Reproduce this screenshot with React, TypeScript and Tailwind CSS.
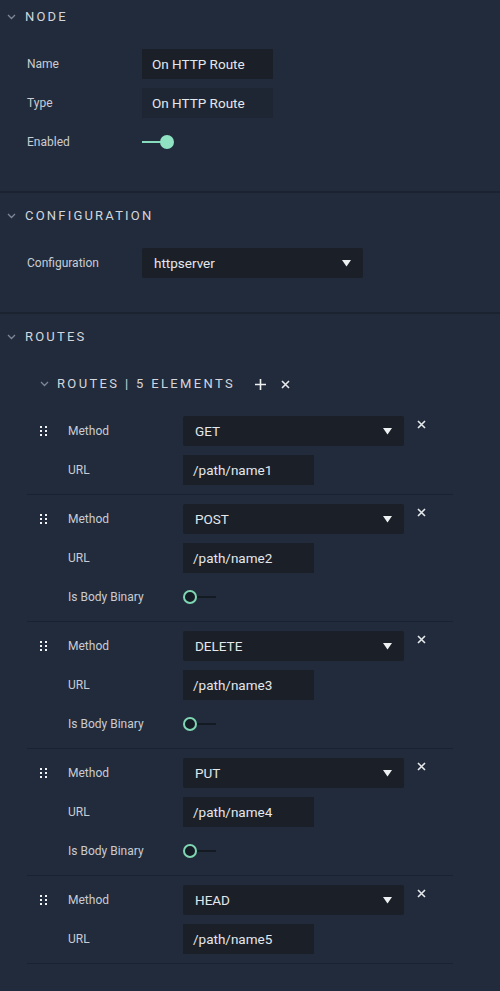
import type { ReactNode } from "react";

const font = { fontFamily: "Roboto, 'Noto Sans', sans-serif" };

type Route = { method: string; url: string; binary: boolean };

const routes: Route[] = [
  { method: "GET", url: "/path/name1", binary: false },
  { method: "POST", url: "/path/name2", binary: true },
  { method: "DELETE", url: "/path/name3", binary: true },
  { method: "PUT", url: "/path/name4", binary: true },
  { method: "HEAD", url: "/path/name5", binary: false },
];

function Chevron() {
  return (
    <svg width="9" height="6" viewBox="0 0 9 6" className="shrink-0">
      <path d="M1 1l3.5 3.5L8 1" fill="none" stroke="#7d8796" strokeWidth="1.3" />
    </svg>
  );
}

function SectionHeader({ title }: { title: string }) {
  return (
    <div className="flex h-[32px] items-center pl-[7px]">
      <Chevron />
      <span className="ml-[9px] text-[13px] tracking-[2.2px] text-[#d3d7dd]">{title}</span>
    </div>
  );
}

function Row({ label, children }: { label: string; children: ReactNode }) {
  return (
    <div className="flex h-[30px] items-center">
      <div className="w-[115px] shrink-0 text-[12px] text-[#c9cdd3]">{label}</div>
      {children}
    </div>
  );
}

function TextBox({ value, dim }: { value: string; dim?: boolean }) {
  return (
    <div
      className={`flex h-[30px] w-[131px] items-center px-[10px] text-[13.5px] text-[#e4e7eb] ${
        dim ? "bg-[#1e2634]" : "bg-[#1a1f28]"
      }`}
    >
      {value}
    </div>
  );
}

function Select({ value }: { value: string }) {
  return (
    <div className="flex h-[30px] w-[221px] items-center justify-between rounded-[2px] bg-[#1a1f28] px-[12px] text-[13.5px] text-[#e4e7eb]">
      <span>{value}</span>
      <svg width="9" height="7" viewBox="0 0 9 7">
        <path d="M0 0h9L4.5 6.5z" fill="#eef0f2" />
      </svg>
    </div>
  );
}

function ToggleOn() {
  return (
    <div className="flex items-center">
      <div className="h-[2px] w-[20px] bg-[#86dcbb]" />
      <div className="-ml-[2px] h-[14px] w-[14px] rounded-full bg-[#8fe3c2]" />
    </div>
  );
}

function ToggleOff() {
  return (
    <div className="flex items-center">
      <div className="h-[14px] w-[14px] rounded-full border-2 border-[#7fd6b3] bg-[#161c25]" />
      <div className="h-[2px] w-[19px] bg-[#141a22]" />
    </div>
  );
}

function Handle() {
  return (
    <div className="grid w-[7px] grid-cols-2 gap-x-[3px] gap-y-[2px]">
      {[0, 1, 2, 3, 4, 5].map((i) => (
        <span key={i} className="h-[2px] w-[2px] bg-[#f0f2f4]" />
      ))}
    </div>
  );
}

function Close() {
  return (
    <svg width="9" height="9" viewBox="0 0 9 9">
      <path d="M1 1l7 7M8 1L1 8" stroke="#e6e9ec" strokeWidth="1.6" />
    </svg>
  );
}

function RouteItem({ r }: { r: Route }) {
  return (
    <div className="flex border-b border-[#1a2130] pb-[9px] pl-[13px] pt-[9px]">
      <div className="flex h-[30px] w-[28px] items-center">
        <Handle />
      </div>
      <div className="flex flex-col gap-[9px]">
        <Row label="Method">
          <Select value={r.method} />
        </Row>
        <Row label="URL">
          <TextBox value={r.url} />
        </Row>
        {r.binary && (
          <Row label="Is Body Binary">
            <ToggleOff />
          </Row>
        )}
      </div>
      <div className="ml-[13px] pt-[4px]">
        <Close />
      </div>
    </div>
  );
}

export default function App() {
  return (
    <div className="min-h-screen w-[500px] bg-[#222b3b] pt-[1px]" style={font}>
      <section className="pb-[34px]">
        <SectionHeader title="NODE" />
        <div className="mt-[16px] flex flex-col gap-[9px] pl-[27px]">
          <Row label="Name">
            <TextBox value="On HTTP Route" />
          </Row>
          <Row label="Type">
            <TextBox value="On HTTP Route" dim />
          </Row>
          <Row label="Enabled">
            <ToggleOn />
          </Row>
        </div>
      </section>

      <section className="border-t-2 border-[#1b2230] pb-[34px] pt-[7px]">
        <SectionHeader title="CONFIGURATION" />
        <div className="mt-[16px] pl-[27px]">
          <Row label="Configuration">
            <Select value="httpserver" />
          </Row>
        </div>
      </section>

      <section className="border-t-2 border-[#1b2230] pt-[7px]">
        <SectionHeader title="ROUTES" />
        <div className="mt-[15px] flex h-[32px] items-center pl-[40px]">
          <Chevron />
          <span className="ml-[8px] text-[13px] tracking-[2.35px] text-[#d3d7dd]">
            ROUTES | 5 ELEMENTS
          </span>
          <svg width="11" height="11" viewBox="0 0 11 11" className="ml-[20px]">
            <path d="M5.5 0v11M0 5.5h11" stroke="#eef0f2" strokeWidth="1.6" />
          </svg>
          <span className="ml-[15px]">
            <Close />
          </span>
        </div>
        <div className="mt-[7px] w-[453px] pl-[27px]">
          {routes.map((r) => (
            <RouteItem key={r.url} r={r} />
          ))}
        </div>
      </section>
    </div>
  );
}
